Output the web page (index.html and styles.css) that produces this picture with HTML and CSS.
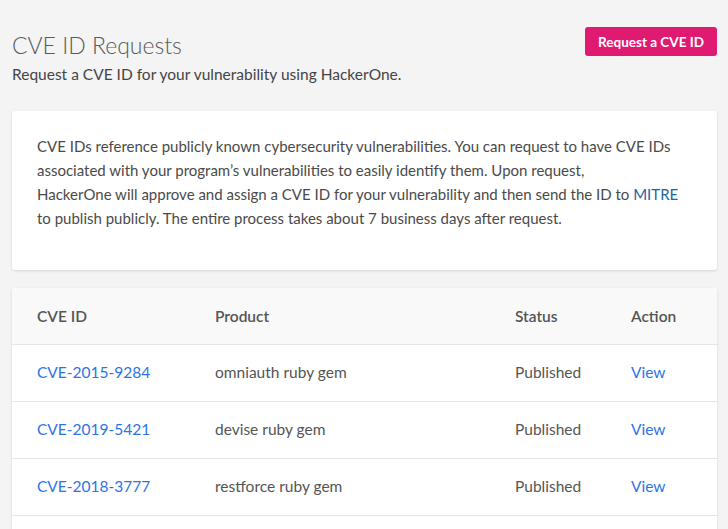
FILE: index.html
```html
<!DOCTYPE html>
<html>
<head>
<meta charset="utf-8">
<link rel="stylesheet" href="styles.css">
</head>
<body>
<div class="page">
  <div class="header">
    <div class="titles">
      <h1 class="title">CVE ID Requests</h1>
      <p class="subtitle">Request a CVE ID for your vulnerability using HackerOne.</p>
    </div>
    <button class="btn">Request a CVE ID</button>
  </div>
  <div class="card intro">
    <p>CVE IDs reference publicly known cybersecurity vulnerabilities. You can request to have CVE IDs<br>associated with your program’s vulnerabilities to easily identify them. Upon request,<br>HackerOne will approve and assign a CVE ID for your vulnerability and then send the ID to <a class="link mitre" href="#">MITRE</a><br>to publish publicly. The entire process takes about 7 business days after request.</p>
  </div>
  <div class="card table-card">
    <table class="table">
      <colgroup><col class="c1"><col class="c2"><col class="c3"><col class="c4"></colgroup>
      <thead>
        <tr><th>CVE ID</th><th>Product</th><th>Status</th><th>Action</th></tr>
      </thead>
      <tbody>
        <tr><td><a class="link" href="#">CVE-2015-9284</a></td><td>omniauth ruby gem</td><td>Published</td><td><a class="link" href="#">View</a></td></tr>
        <tr><td><a class="link" href="#">CVE-2019-5421</a></td><td>devise ruby gem</td><td>Published</td><td><a class="link" href="#">View</a></td></tr>
        <tr><td><a class="link" href="#">CVE-2018-3777</a></td><td>restforce ruby gem</td><td>Published</td><td><a class="link" href="#">View</a></td></tr>
      </tbody>
    </table>
  </div>
</div>
</body>
</html>
```
FILE: styles.css
```css
html, body {
  margin: 0;
  padding: 0;
  background: #f4f4f4;
  font-family: Lato, "Open Sans", sans-serif;
  color: #555;
}
.page {
  padding: 26px 11px 0 12px;
}
.header {
  display: flex;
  justify-content: space-between;
  align-items: flex-start;
}
.title {
  margin: 5px 0 0 0;
  font-size: 23px;
  font-weight: 300;
  color: #5a5a5a;
  line-height: 28px;
}
.subtitle {
  margin: 5px 0 0 0;
  font-size: 15.5px;
  line-height: 20px;
  color: #444;
}
.btn {
  margin-top: 1px;
  background: #e01a71;
  color: #fff;
  border: 0;
  border-radius: 3px;
  height: 29px;
  width: 132px;
  font-family: inherit;
  font-size: 13.5px;
  font-weight: 700;
  padding: 0;
}
.card {
  background: #fff;
  border-radius: 3px;
  box-shadow: 0 1px 3px rgba(0,0,0,0.12);
}
.intro {
  margin-top: 27px;
  padding: 23px 25px 40px 25px;
}
.intro p {
  margin: 0;
  font-size: 15px;
  line-height: 24px;
  color: #4a4a4a;
  white-space: nowrap;
}
.link {
  color: #2d73e6;
  text-decoration: none;
}
.mitre {
  color: #1e64a0;
}
.table-card {
  margin-top: 18px;
  padding-bottom: 40px;
  overflow: hidden;
}
.table {
  width: 100%;
  border-collapse: collapse;
  table-layout: fixed;
  font-size: 15.5px;
}
.c1 { width: 203px; }
.c2 { width: 300px; }
.c3 { width: 116px; }
.table th {
  background: #f9f9f9;
  text-align: left;
  font-weight: 600;
  color: #555;
  height: 55px;
  padding: 0 0 1px 0;
  border-bottom: 1px solid #e6e6e6;
}
.table td {
  height: 54px;
  padding: 0 0 2px 0;
  border-bottom: 1px solid #e6e6e6;
  color: #555;
}
.table th:first-child, .table td:first-child {
  padding-left: 25px;
}
```
